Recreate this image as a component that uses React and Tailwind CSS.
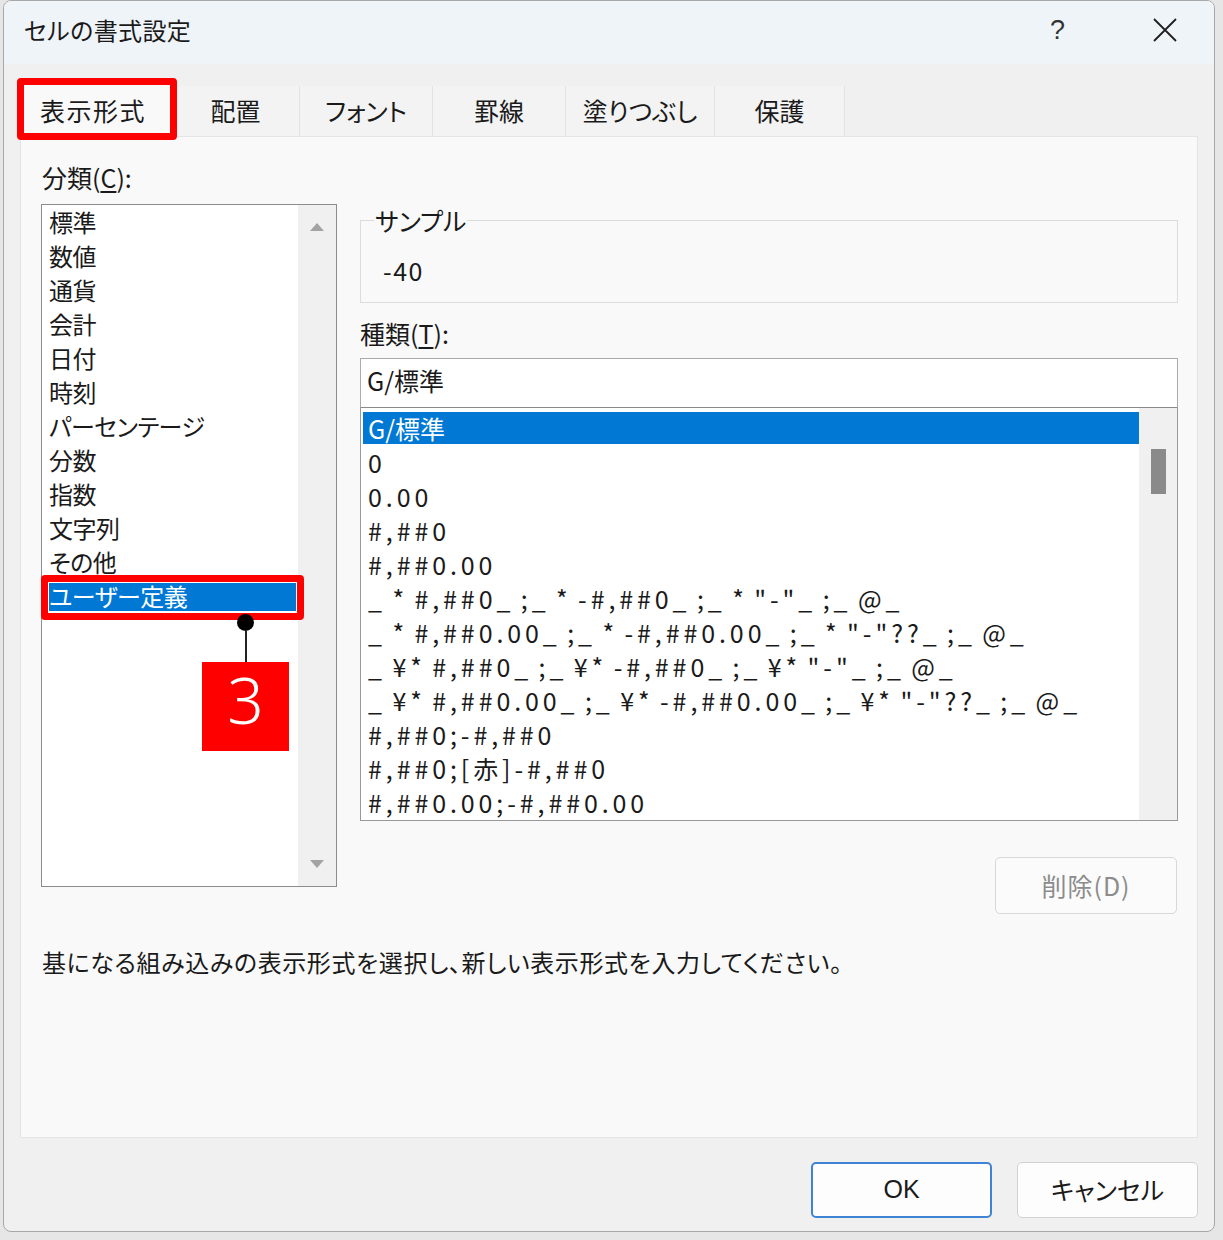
import React from 'react';

const categories = [
  '標準', '数値', '通貨', '会計', '日付', '時刻', 'パーセンテージ',
  '分数', '指数', '文字列', 'その他', 'ユーザー定義',
];

const formats = [
  'G/標準',
  '0',
  '0.00',
  '#,##0',
  '#,##0.00',
  '_ * #,##0_ ;_ * -#,##0_ ;_ * "-"_ ;_ @_',
  '_ * #,##0.00_ ;_ * -#,##0.00_ ;_ * "-"??_ ;_ @_',
  '_ ¥* #,##0_ ;_ ¥* -#,##0_ ;_ ¥* "-"_ ;_ @_',
  '_ ¥* #,##0.00_ ;_ ¥* -#,##0.00_ ;_ ¥* "-"??_ ;_ @_',
  '#,##0;-#,##0',
  '#,##0;[赤]-#,##0',
  '#,##0.00;-#,##0.00',
];

const tabs = [
  { label: '配置', w: 'w-[128px]' },
  { label: 'フォント', w: 'w-[133px]' },
  { label: '罫線', w: 'w-[133px]' },
  { label: '塗りつぶし', w: 'w-[149px]' },
  { label: '保護', w: 'w-[130px]' },
];

const App = () => {
  return (
    <div className="w-[1223px] h-[1240px] bg-[#e6e6e6] overflow-hidden text-[#1a1a1a] font-['Noto_Sans_CJK_JP',sans-serif] [font-feature-settings:'palt']">
      <div className="ml-[3px] w-[1212px] h-[1232px] bg-[#f0f0f0] border border-[#a8a8a8] rounded-[8px] flex flex-col overflow-hidden">
        {/* title bar */}
        <div className="h-[63px] bg-[#eff4f9] flex items-center pl-[20px] pb-[5px] shrink-0">
          <span className="text-[24px] leading-[34px] tracking-[0.4px] text-[#1a1a1a]">セルの書式設定</span>
          <span className="ml-auto text-[27px] leading-none text-[#333] mr-[88px] font-['Liberation_Sans',sans-serif]">?</span>
          <svg width="24" height="24" viewBox="0 0 24 24" className="mr-[37px]">
            <path d="M1 1 L23 23 M23 1 L1 23" stroke="#1f1f1f" strokeWidth="1.8" fill="none" />
          </svg>
        </div>

        {/* tabs */}
        <div className="h-[72px] flex items-end pl-[18px] shrink-0">
          <div className="relative w-[150px] h-[54px] bg-[#f9f9f9] flex items-center justify-center">
            <span className="text-[25px] leading-[34px] mt-[2px] mr-[8px] tracking-[1.5px]">表示形式</span>
            <div className="absolute left-[-5px] top-[-4px] w-[160px] h-[62px] border-[7px] border-[#ff0000] rounded-[4px]" />
          </div>
          {tabs.map((t) => (
            <div
              key={t.label}
              className={`${t.w} h-[50px] bg-[#f3f3f3] border-r border-[#e2e2e2] flex items-center justify-center`}
            >
              <span className="text-[25px] leading-[34px] mb-[2px]">{t.label}</span>
            </div>
          ))}
        </div>

        {/* panel */}
        <div className="mx-[16px] h-[1002px] bg-[#f9f9f9] border border-[#e4e4e4] pl-[20px] pt-[23px] shrink-0">
          <div className="ml-[1px] text-[25px] leading-[34px]">
            分類(<span className="underline underline-offset-[3px]">C</span>):
          </div>

          <div className="mt-[10px] flex gap-[23px] items-start">
            {/* category list */}
            <div className="relative w-[296px] h-[683px] bg-white border border-[#8c8c8c] flex">
              <div className="flex-1 pt-[1px]">
                {categories.map((c, i) =>
                  i === categories.length - 1 ? (
                    <div key={c} className="relative h-[34px] flex items-center pl-[7px] pr-[2px]">
                      <div className="h-[28px] w-full bg-[#0078d4] text-white text-[24px] leading-[26px] tracking-[-0.5px]">
                        {c}
                      </div>
                      <div className="absolute left-[-1px] top-[-5px] w-[263px] h-[45px] border-[7px] border-[#ff0000] rounded-[4px]" />
                    </div>
                  ) : (
                    <div key={c} className="h-[34px] pl-[7px] text-[24px] leading-[32px] tracking-[-0.5px]">
                      {c}
                    </div>
                  )
                )}
              </div>
              <div className="w-[38px] bg-[#f0f0f0] flex flex-col items-center justify-between py-[17px]">
                <svg width="16" height="10" viewBox="0 0 16 10">
                  <path d="M8 1 L15 9 L1 9 Z" fill="#a3a3a3" />
                </svg>
                <svg width="16" height="10" viewBox="0 0 16 10">
                  <path d="M1 1 L15 1 L8 9 Z" fill="#a3a3a3" />
                </svg>
              </div>

              {/* annotation */}
              <div className="absolute left-[160px] top-[409px] w-[87px] flex flex-col items-center">
                <div className="w-[17px] h-[17px] rounded-full bg-black" />
                <div className="w-[2px] h-[31px] bg-[#222]" />
                <div className="w-[87px] h-[89px] bg-[#ff0000] flex items-center justify-center">
                  <span className="text-white text-[64px] leading-none font-light mb-[14px] font-['Noto_Sans',sans-serif]">3</span>
                </div>
              </div>
            </div>

            {/* right column */}
            <div className="w-[818px] flex flex-col">
              <fieldset className="border border-[#dcdcdc] pt-[17px] pb-[15px]">
                <legend className="ml-[13px] text-[25px] leading-[32px] px-[1px]">サンプル</legend>
                <div className="pl-[22px] text-[25px] leading-[34px] tracking-[1.5px]">-40</div>
              </fieldset>

              <div className="mt-[13px] text-[25px] leading-[34px]">
                種類(<span className="underline underline-offset-[3px]">T</span>):
              </div>

              <div className="mt-[8px] h-[50px] bg-white border border-[#ababab] border-b-[#8a8a8a] flex items-center pl-[6px] pb-[5px] text-[25px]">
                G/標準
              </div>

              <div className="h-[413px] bg-white border border-[#999] border-t-0 flex">
                <div className="flex-1 pt-[4px] pl-[2px]">
                  {formats.map((f, i) => (
                    <div key={i} className="h-[34px]">
                      {i === 0 ? (
                        <div className="h-[32px] pl-[5px] text-[25px] leading-[32px] bg-[#0078d4] text-white">
                          {f}
                        </div>
                      ) : (
                        <div className="h-[32px] pl-[5px] text-[25px] leading-[32px] tracking-[3.9px] [word-spacing:-3px] whitespace-pre">
                          {f}
                        </div>
                      )}
                    </div>
                  ))}
                </div>
                <div className="w-[38px] bg-[#f0f0f0] pt-[41px] flex justify-center">
                  <div className="w-[15px] h-[45px] bg-[#8a8a8a]" />
                </div>
              </div>

              <div className="mt-[36px] flex justify-end pr-[1px]">
                <div className="w-[182px] h-[57px] bg-[#fbfbfb] border border-[#d8d8d8] rounded-[5px] flex items-center justify-center text-[25px] tracking-[1px] text-[#8c8c8c]">
                  削除(D)
                </div>
              </div>
            </div>
          </div>

          <div className="mt-[31px] ml-[1px] text-[24px] leading-[34px] tracking-[0.6px]">
            基になる組み込みの表示形式を選択し、新しい表示形式を入力してください。
          </div>
        </div>

        {/* buttons */}
        <div className="flex justify-end gap-[25px] pt-[24px] pr-[16px]">
          <div className="w-[181px] h-[56px] bg-[#fdfdfd] border-2 border-[#3f84d4] rounded-[5px] flex items-center justify-center text-[25px] font-['Liberation_Sans',sans-serif]">
            OK
          </div>
          <div className="w-[181px] h-[56px] bg-[#fdfdfd] border border-[#d2d2d2] rounded-[5px] flex items-center justify-center text-[25px]">
            キャンセル
          </div>
        </div>
      </div>
    </div>
  );
};

export default App;
